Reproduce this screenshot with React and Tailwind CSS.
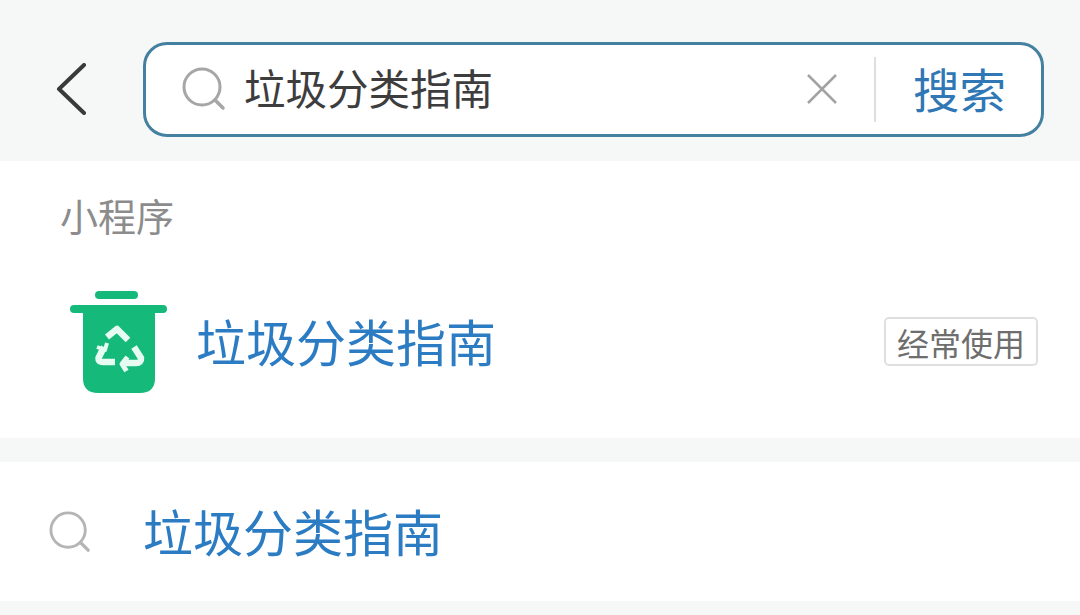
const cjk = "font-['Noto_Sans_CJK_SC','Liberation_Sans',sans-serif]";

function SearchGlyph({ className, color }) {
  return (
    <svg viewBox="0 0 44 44" fill="none" className={className}>
      <circle cx="20" cy="20" r="18" stroke={color} strokeWidth="3" />
      <path d="M33 33L41 41" stroke={color} strokeWidth="3.5" strokeLinecap="round" />
    </svg>
  );
}

function Bin() {
  return (
    <svg viewBox="0 0 98 104" className="w-[98px] h-[104px] shrink-0">
      <rect x="25" y="1" width="43" height="8" rx="4" fill="#15b97a" />
      <rect x="0" y="15" width="97" height="8" rx="4" fill="#15b97a" />
      <path d="M13 20H85V88Q85 103 70 103H28Q13 103 13 88Z" fill="#15b97a" />
      <g fill="none" stroke="#e6fbf2" strokeWidth="6.500" strokeLinejoin="round" strokeLinecap="butt">
        <path d="M37 47L47 39L58 50" />
        <path d="M34 57L28.500 68Q28 72 33 72L45 72" />
        <path d="M64 57L71 68Q71.500 73 66 73L53 73" />
        <path d="M57.500 67L52 74L56.500 81" strokeWidth="5" />
        <path d="M27 57L35 60L37 53" strokeWidth="4" />
      </g>
    </svg>
  );
}

export default function App() {
  return (
    <div className={`w-[1080px] h-[615px] overflow-hidden bg-[#f6f7f7] flex flex-col ${cjk}`}>
      <header className="h-[161px] flex items-center pl-[56px] pr-[36px] pt-[17px]">
        <svg viewBox="0 0 32 52" fill="none" className="w-[32px] h-[52px] shrink-0 mr-[55px]">
          <path d="M28 2L3 26L28 50" stroke="#3a3a3a" strokeWidth="4" strokeLinecap="round" strokeLinejoin="round" />
        </svg>
        <div className="flex-1 h-[95px] rounded-[24px] border-[3px] border-[#44809f] bg-white flex items-center pl-[36px]">
          <SearchGlyph className="w-[44px] h-[44px] shrink-0" color="#a6a6a6" />
          <span className="ml-[18px] -mt-[2px] text-[41.500px] leading-none text-[#3d3d3d]">垃圾分类指南</span>
          <svg viewBox="0 0 32 32" fill="none" className="w-[32px] h-[32px] ml-auto mr-[-1px] shrink-0">
            <path d="M2 2L30 30M30 2L2 30" stroke="#a3a3a3" strokeWidth="2.500" />
          </svg>
          <div className="w-[2px] h-[65px] bg-[#dcdfe0] ml-[37px] shrink-0" />
          <span className="ml-[37px] mr-[35px] -mt-[2px] text-[46.500px] leading-none text-[#2f77b5]">搜索</span>
        </div>
      </header>

      <section className="h-[277px] bg-white px-[60px] pt-[32px] flex flex-col">
        <div className="text-[38px] leading-[44px] text-[#8c8c8c]">小程序</div>
        <div className="flex items-center mt-[53px] ml-[10px] mr-[-18px]">
          <Bin />
          <span className="ml-[28px] -mt-[4px] text-[50px] leading-none text-[#2c7cc4]">垃圾分类指南</span>
          <span className="ml-auto w-[154px] h-[49px] -mt-[1px] rounded-[5px] border-2 border-[#dfdfdf] flex items-center justify-center text-[32px] leading-none text-[#6e6e6e]">经常使用</span>
        </div>
      </section>

      <section className="mt-[24px] h-[139px] bg-white flex items-center pl-[49px]">
        <SearchGlyph className="w-[42px] h-[42px] shrink-0" color="#b5b5b5" />
        <span className="ml-[52px] -mt-[4px] text-[50px] leading-none text-[#2c7cc4]">垃圾分类指南</span>
      </section>
    </div>
  );
}
